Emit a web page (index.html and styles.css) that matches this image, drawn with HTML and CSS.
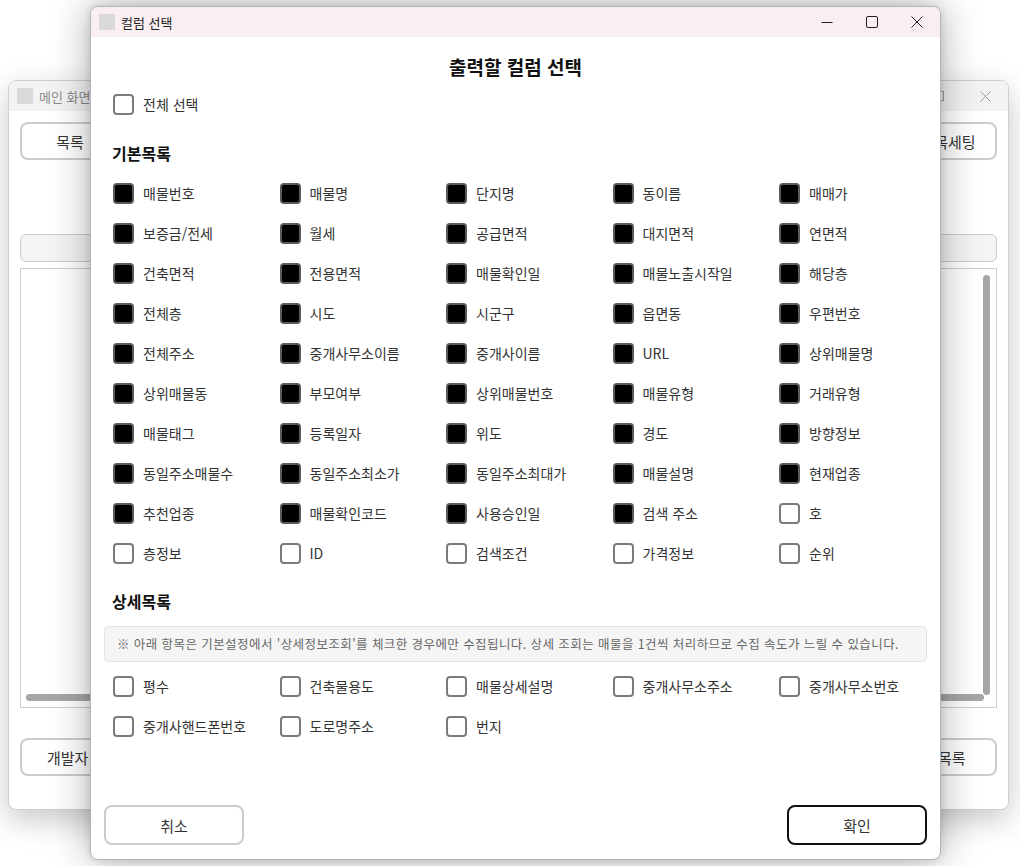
FILE: index.html
```html
<!DOCTYPE html>
<html lang="ko">
<head>
<meta charset="utf-8">
<title>컬럼 선택</title>
<link rel="stylesheet" href="styles.css">
</head>
<body>
<div class="desktop">
  <!-- Background main window -->
  <div class="win main-win">
    <div class="win-title main-title">
      <span class="app-icon"></span>
      <span class="win-title-text">메인 화면</span>
      <span class="spacer"></span>
      <span class="ctl"><svg width="10" height="10" viewBox="0 0 10 10"><rect x="0.5" y="0.5" width="9" height="9" fill="none" stroke="#999" stroke-width="1"/></svg></span>
      <span class="ctl"><svg width="11" height="11" viewBox="0 0 11 11"><path d="M0.5 0.5 L10.5 10.5 M10.5 0.5 L0.5 10.5" stroke="#999" stroke-width="1"/></svg></span>
    </div>
    <div class="main-body">
      <div class="main-row">
        <button class="mbtn mbtn-left">목록</button>
        <button class="mbtn mbtn-right">항목세팅</button>
      </div>
      <div class="progress"></div>
      <div class="panel">
        <div class="vthumb"></div>
        <div class="hthumb"></div>
      </div>
      <div class="main-row bottom-row">
        <button class="mbtn mbtn-left2">개발자 정보</button>
        <button class="mbtn mbtn-right2">매물목록</button>
      </div>
    </div>
  </div>

  <!-- Dialog -->
  <div class="win dialog">
    <div class="win-title dlg-title">
      <span class="app-icon"></span>
      <span class="win-title-text dark">컬럼 선택</span>
      <span class="spacer"></span>
      <span class="dctl"><svg width="12" height="12" viewBox="0 0 12 12"><path d="M0.5 6.5 H11.5" stroke="#222" stroke-width="1"/></svg></span>
      <span class="dctl"><svg width="12" height="12" viewBox="0 0 12 12"><rect x="0.5" y="0.5" width="11" height="11" rx="1.5" fill="none" stroke="#222" stroke-width="1"/></svg></span>
      <span class="dctl"><svg width="12" height="12" viewBox="0 0 12 12"><path d="M0.5 0.5 L11.5 11.5 M11.5 0.5 L0.5 11.5" stroke="#222" stroke-width="1"/></svg></span>
    </div>
    <div class="dlg-body">
      <h1 class="dlg-heading">출력할 컬럼 선택</h1>
      <label class="item select-all"><span class="cb"></span><span class="lbl">전체 선택</span></label>
      <h2 class="section">기본목록</h2>
      <div class="grid">
        <label class="item"><span class="cb on"></span><span class="lbl">매물번호</span></label>
        <label class="item"><span class="cb on"></span><span class="lbl">매물명</span></label>
        <label class="item"><span class="cb on"></span><span class="lbl">단지명</span></label>
        <label class="item"><span class="cb on"></span><span class="lbl">동이름</span></label>
        <label class="item"><span class="cb on"></span><span class="lbl">매매가</span></label>

        <label class="item"><span class="cb on"></span><span class="lbl">보증금/전세</span></label>
        <label class="item"><span class="cb on"></span><span class="lbl">월세</span></label>
        <label class="item"><span class="cb on"></span><span class="lbl">공급면적</span></label>
        <label class="item"><span class="cb on"></span><span class="lbl">대지면적</span></label>
        <label class="item"><span class="cb on"></span><span class="lbl">연면적</span></label>

        <label class="item"><span class="cb on"></span><span class="lbl">건축면적</span></label>
        <label class="item"><span class="cb on"></span><span class="lbl">전용면적</span></label>
        <label class="item"><span class="cb on"></span><span class="lbl">매물확인일</span></label>
        <label class="item"><span class="cb on"></span><span class="lbl">매물노출시작일</span></label>
        <label class="item"><span class="cb on"></span><span class="lbl">해당층</span></label>

        <label class="item"><span class="cb on"></span><span class="lbl">전체층</span></label>
        <label class="item"><span class="cb on"></span><span class="lbl">시도</span></label>
        <label class="item"><span class="cb on"></span><span class="lbl">시군구</span></label>
        <label class="item"><span class="cb on"></span><span class="lbl">읍면동</span></label>
        <label class="item"><span class="cb on"></span><span class="lbl">우편번호</span></label>

        <label class="item"><span class="cb on"></span><span class="lbl">전체주소</span></label>
        <label class="item"><span class="cb on"></span><span class="lbl">중개사무소이름</span></label>
        <label class="item"><span class="cb on"></span><span class="lbl">중개사이름</span></label>
        <label class="item"><span class="cb on"></span><span class="lbl">URL</span></label>
        <label class="item"><span class="cb on"></span><span class="lbl">상위매물명</span></label>

        <label class="item"><span class="cb on"></span><span class="lbl">상위매물동</span></label>
        <label class="item"><span class="cb on"></span><span class="lbl">부모여부</span></label>
        <label class="item"><span class="cb on"></span><span class="lbl">상위매물번호</span></label>
        <label class="item"><span class="cb on"></span><span class="lbl">매물유형</span></label>
        <label class="item"><span class="cb on"></span><span class="lbl">거래유형</span></label>

        <label class="item"><span class="cb on"></span><span class="lbl">매물태그</span></label>
        <label class="item"><span class="cb on"></span><span class="lbl">등록일자</span></label>
        <label class="item"><span class="cb on"></span><span class="lbl">위도</span></label>
        <label class="item"><span class="cb on"></span><span class="lbl">경도</span></label>
        <label class="item"><span class="cb on"></span><span class="lbl">방향정보</span></label>

        <label class="item"><span class="cb on"></span><span class="lbl">동일주소매물수</span></label>
        <label class="item"><span class="cb on"></span><span class="lbl">동일주소최소가</span></label>
        <label class="item"><span class="cb on"></span><span class="lbl">동일주소최대가</span></label>
        <label class="item"><span class="cb on"></span><span class="lbl">매물설명</span></label>
        <label class="item"><span class="cb on"></span><span class="lbl">현재업종</span></label>

        <label class="item"><span class="cb on"></span><span class="lbl">추천업종</span></label>
        <label class="item"><span class="cb on"></span><span class="lbl">매물확인코드</span></label>
        <label class="item"><span class="cb on"></span><span class="lbl">사용승인일</span></label>
        <label class="item"><span class="cb on"></span><span class="lbl">검색 주소</span></label>
        <label class="item"><span class="cb"></span><span class="lbl">호</span></label>

        <label class="item"><span class="cb"></span><span class="lbl">층정보</span></label>
        <label class="item"><span class="cb"></span><span class="lbl">ID</span></label>
        <label class="item"><span class="cb"></span><span class="lbl">검색조건</span></label>
        <label class="item"><span class="cb"></span><span class="lbl">가격정보</span></label>
        <label class="item"><span class="cb"></span><span class="lbl">순위</span></label>
      </div>
      <h2 class="section section2">상세목록</h2>
      <div class="notice">※ 아래 항목은 기본설정에서 '상세정보조회'를 체크한 경우에만 수집됩니다. 상세 조회는 매물을 1건씩 처리하므로 수집 속도가 느릴 수 있습니다.</div>
      <div class="grid grid2">
        <label class="item"><span class="cb"></span><span class="lbl">평수</span></label>
        <label class="item"><span class="cb"></span><span class="lbl">건축물용도</span></label>
        <label class="item"><span class="cb"></span><span class="lbl">매물상세설명</span></label>
        <label class="item"><span class="cb"></span><span class="lbl">중개사무소주소</span></label>
        <label class="item"><span class="cb"></span><span class="lbl">중개사무소번호</span></label>
        <label class="item"><span class="cb"></span><span class="lbl">중개사핸드폰번호</span></label>
        <label class="item"><span class="cb"></span><span class="lbl">도로명주소</span></label>
        <label class="item"><span class="cb"></span><span class="lbl">번지</span></label>
      </div>
      <div class="footer">
        <button class="dbtn">취소</button>
        <button class="dbtn primary">확인</button>
      </div>
    </div>
  </div>
</div>
</body>
</html>
```

FILE: styles.css
```css
* { box-sizing: border-box; }
html, body { margin: 0; padding: 0; background: #ffffff; }
body {
  font-family: "Noto Sans CJK KR", "Noto Sans", sans-serif;
  color: #333;
}
.desktop {
  position: relative;
  width: 1020px;
  height: 866px;
  overflow: hidden;
  background: #ffffff;
}
.win {
  position: absolute;
  background: #ffffff;
  border-radius: 8px;
  overflow: hidden;
}
.win-title {
  height: 30px;
  display: flex;
  align-items: center;
  padding-left: 8px;
}
.app-icon {
  width: 16px;
  height: 16px;
  background: #d9d9d9;
  flex: none;
}
.win-title-text {
  margin-left: 6px;
  font-size: 13px;
  color: #8a8a8a;
}
.win-title-text.dark { color: #222; }
.spacer { flex: 1; }

/* main window */
.main-win {
  left: 8px;
  top: 80px;
  width: 1001px;
  height: 730px;
  border: 1px solid #cfcfcf;
  box-shadow: 0 10px 30px rgba(0,0,0,0.22);
}
.main-title {
  background: #f3f3f3;
}
.ctl {
  width: 46px;
  display: flex;
  justify-content: center;
  align-items: center;
}
.main-body {
  padding: 11px 11px 0 11px;
  display: flex;
  flex-direction: column;
}
.main-row {
  display: flex;
  justify-content: space-between;
  height: 38px;
}
.mbtn {
  font-family: inherit;
  font-size: 15px;
  color: #333;
  background: #fff;
  border: 2px solid #cccccc;
  border-radius: 8px;
  height: 38px;
  padding: 0;
}
.mbtn-left { width: 100px; }
.mbtn-right { width: 114px; padding-left: 16px; }
.mbtn-left2 { width: 110px; text-align: left; padding-left: 25px; }
.mbtn-right2 { width: 114px; padding-right: 4px; }
.progress {
  margin-top: 74px;
  height: 28px;
  border: 1px solid #cccccc;
  border-radius: 6px;
  background: #f4f4f4;
}
.panel {
  position: relative;
  margin-top: 6px;
  height: 440px;
  border: 1px solid #cccccc;
  background: #ffffff;
}
.vthumb {
  position: absolute;
  right: 6px;
  top: 6px;
  width: 7px;
  height: 420px;
  border-radius: 4px;
  background: #a6a6a6;
}
.hthumb {
  position: absolute;
  left: 5px;
  bottom: 6px;
  width: 958px;
  height: 7px;
  border-radius: 4px;
  background: #a6a6a6;
}
.bottom-row { margin-top: 30px; }

/* dialog */
.dialog {
  left: 90px;
  top: 6px;
  width: 851px;
  height: 854px;
  border: 1px solid #b5b5b5;
  box-shadow: 0 0 40px rgba(0,0,0,0.32), 0 0 8px rgba(0,0,0,0.12);
  display: flex;
  flex-direction: column;
}
.dlg-title {
  background: #f9eef2;
  flex: none;
}
.dctl {
  width: 45px;
  height: 30px;
  display: flex;
  justify-content: center;
  align-items: center;
}
.dctl:last-child { margin-right: 1px; }
.dlg-body {
  flex: 1;
  display: flex;
  flex-direction: column;
  padding: 0 13px 14px 13px;
}
.dlg-heading {
  margin: 17px 0 0 0;
  height: 26px;
  line-height: 26px;
  text-align: center;
  font-size: 19px;
  font-weight: 700;
  color: #111;
}
.item {
  display: flex;
  align-items: center;
  height: 40px;
  font-size: 14px;
  color: #333;
  white-space: nowrap;
}
.select-all {
  margin-top: 4px;
  padding-left: 9px;
}
.cb {
  width: 21px;
  height: 21px;
  border: 2px solid #7b7b7b;
  border-radius: 4px;
  background: #fff;
  flex: none;
}
.cb.on {
  background: #000;
  border-color: #5a5a5a;
}
.lbl { margin-left: 9px; }
.section {
  margin: 9px 0 0 0;
  padding-left: 8px;
  height: 40px;
  line-height: 40px;
  font-size: 16px;
  font-weight: 700;
  color: #111;
}
.section2 { margin-top: 8px; }
.grid {
  display: grid;
  grid-template-columns: repeat(5, 166.5px);
  padding-left: 9px;
}
.notice {
  margin-top: 5px;
  height: 36px;
  line-height: 34px;
  border: 1px solid #e3e3e3;
  border-radius: 4px;
  background: #f5f5f5;
  font-size: 12.5px;
  color: #666;
  padding-left: 12px;
  white-space: nowrap;
  letter-spacing: 0.42px;
}
.grid2 { margin-top: 4px; }
.footer {
  margin-top: auto;
  display: flex;
  justify-content: space-between;
}
.dbtn {
  width: 140px;
  height: 40px;
  font-family: inherit;
  font-size: 15px;
  color: #333;
  background: #fff;
  border: 2px solid #cccccc;
  border-radius: 8px;
}
.dbtn.primary { border-color: #111; }
```
